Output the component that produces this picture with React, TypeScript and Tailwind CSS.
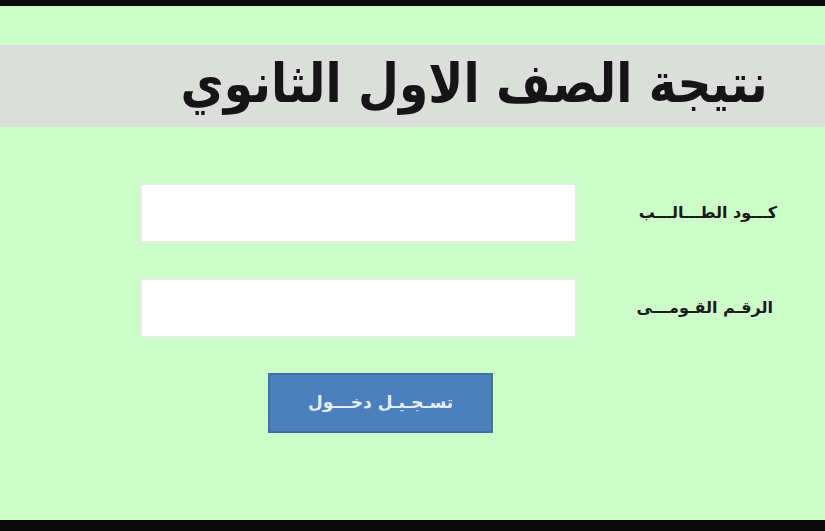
import React from "react";

export default function App() {
  return (
    <div className="w-[825px] h-[531px] flex flex-col bg-black overflow-hidden" style={{ fontFamily: '"DejaVu Sans", sans-serif' }}>
      <div className="h-[6px] bg-[#0a0a0a]" />
      <div className="flex-1 bg-[#ccfdc9] flex flex-col">
        <div className="mt-[39px] h-[82px] bg-[#dcdedb] flex items-center justify-end pr-[57px]">
          <h1 dir="rtl" className="text-[54px] font-bold text-[#151515] leading-none pb-[4px] scale-x-[0.873] origin-right whitespace-nowrap">
            نتيجة الصف الاول الثانوي
          </h1>
        </div>
        <div className="mt-[56px] flex flex-col gap-[35px]">
          <div className="flex items-center">
            <input className="ml-[140px] w-[437px] h-[60px] bg-white border-2 border-[#e4efe2] outline-none" />
            <div className="flex-1 flex justify-end pr-[48px]">
              <span dir="rtl" className="text-[16px] font-bold text-[#1a1a1a] whitespace-nowrap">كـــود الطـــالـــب</span>
            </div>
          </div>
          <div className="flex items-center">
            <input className="ml-[140px] w-[437px] h-[60px] bg-white border-2 border-[#e4efe2] outline-none" />
            <div className="flex-1 flex justify-end pr-[52px]">
              <span dir="rtl" className="text-[16px] font-bold text-[#1a1a1a] whitespace-nowrap">الرقـم القـومـــى</span>
            </div>
          </div>
          <div className="flex">
            <button className="ml-[268px] w-[225px] h-[60px] bg-[#4b7fbd] border-2 border-[#3f70aa] text-[#e4eefa] text-[17px] font-bold flex items-center justify-center whitespace-nowrap">
              <span dir="rtl">تسـجـيـل دخـــول</span>
            </button>
          </div>
        </div>
      </div>
      <div className="h-[11px] bg-[#0a0a0a]" />
    </div>
  );
}
